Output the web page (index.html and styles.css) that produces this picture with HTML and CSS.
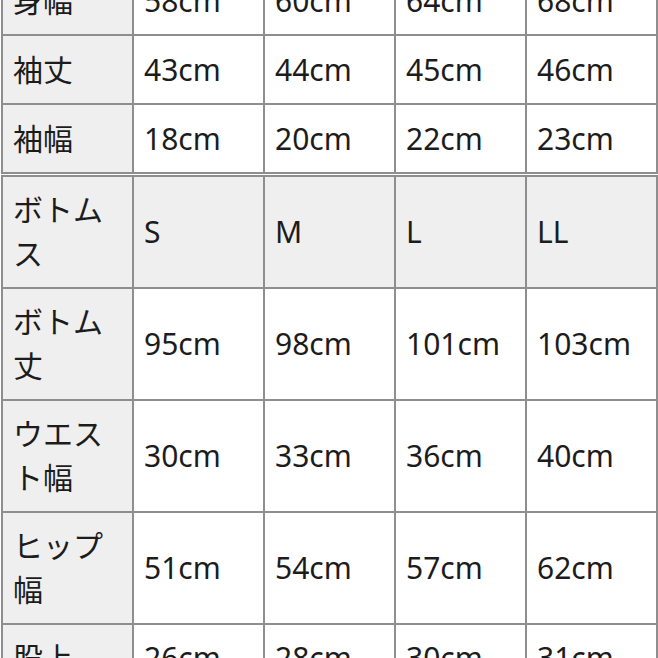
FILE: index.html
```html
<!DOCTYPE html>
<html lang="ja">
<head>
<meta charset="utf-8">
<link rel="stylesheet" href="styles.css">
</head>
<body>
<div class="page">
  <table class="size-table top">
    <tr><th>身幅</th><td>58cm</td><td>60cm</td><td>64cm</td><td>68cm</td></tr>
    <tr><th>袖丈</th><td>43cm</td><td>44cm</td><td>45cm</td><td>46cm</td></tr>
    <tr><th>袖幅</th><td>18cm</td><td>20cm</td><td>22cm</td><td>23cm</td></tr>
  </table>
  <table class="size-table bottom">
    <tr class="head"><th>ボトムス</th><th>S</th><th>M</th><th>L</th><th>LL</th></tr>
    <tr><th>ボトム丈</th><td>95cm</td><td>98cm</td><td>101cm</td><td>103cm</td></tr>
    <tr><th>ウエスト幅</th><td>30cm</td><td>33cm</td><td>36cm</td><td>40cm</td></tr>
    <tr><th>ヒップ幅</th><td>51cm</td><td>54cm</td><td>57cm</td><td>62cm</td></tr>
    <tr><th>股上</th><td>26cm</td><td>28cm</td><td>30cm</td><td>31cm</td></tr>
  </table>
</div>
</body>
</html>
```
FILE: styles.css
```css
html, body {
  margin: 0;
  padding: 0;
  background: #ffffff;
  overflow: hidden;
}
.page {
  width: 658px;
  height: 658px;
  overflow: hidden;
  font-family: "Noto Sans", "Noto Sans CJK JP", sans-serif;
  font-size: 30px;
  color: #1c1c1c;
}
.size-table {
  border-collapse: collapse;
  table-layout: fixed;
  width: 657px;
  margin-left: 1px;
}
.size-table.top {
  margin-top: -35px;
}
.size-table.bottom {
  margin-top: 1px;
}
.size-table th,
.size-table td {
  border: 2px solid #8e8e8e;
  padding: 12px 10px 11px 10px;
  line-height: 44px;
  text-align: left;
  vertical-align: middle;
  font-weight: normal;
  word-break: break-all;
}
.size-table.bottom th,
.size-table.bottom td {
  padding-top: 11px;
  padding-bottom: 11px;
}
.size-table th {
  background: #efefef;
}
.size-table td {
  background: #ffffff;
}
.size-table .head th {
  background: #efefef;
}
```
